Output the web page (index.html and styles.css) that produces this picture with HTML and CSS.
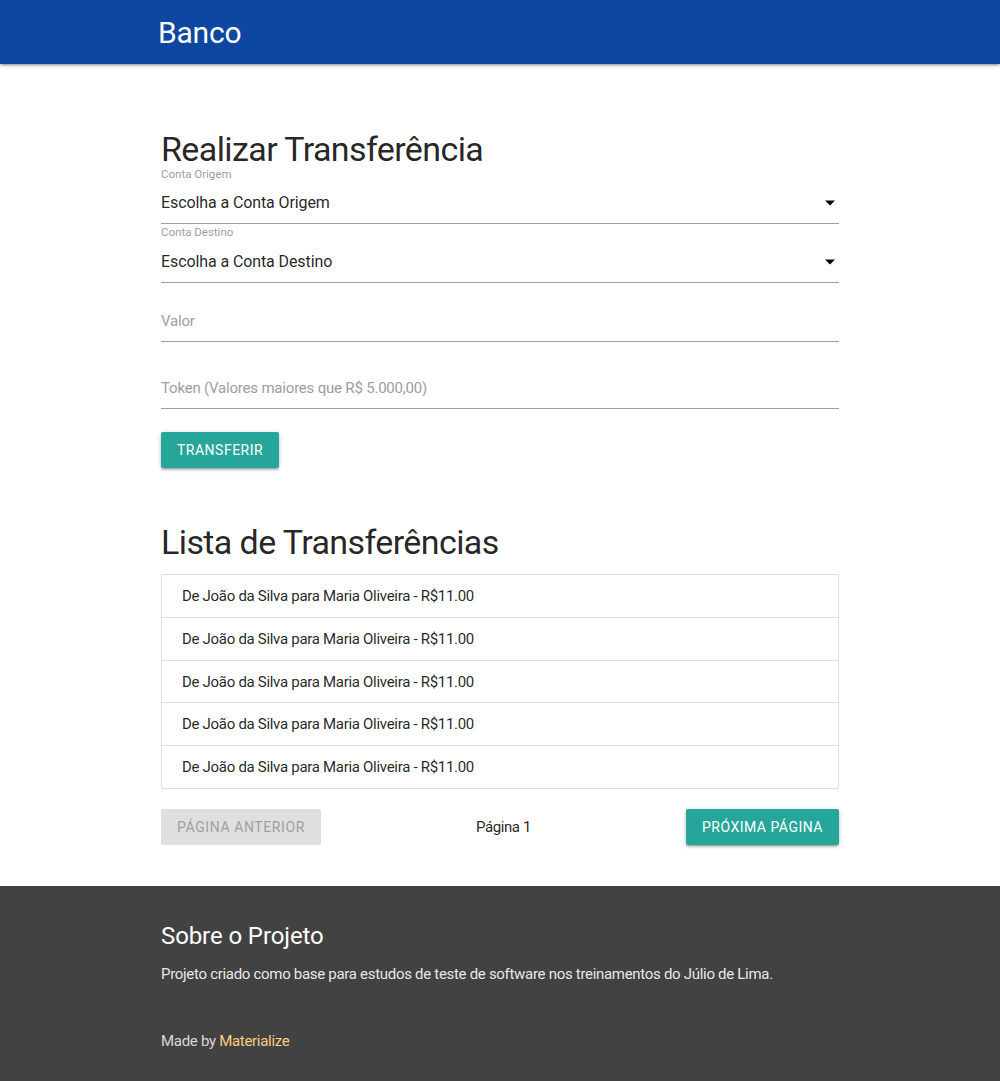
FILE: index.html
```html
<!DOCTYPE html>
<html lang="pt-BR">
<head>
<meta charset="utf-8">
<title>Banco</title>
<link rel="stylesheet" href="styles.css">
</head>
<body>
<header class="navbar">
  <div class="nav-inner">
    <span class="brand">Banco</span>
  </div>
</header>

<main class="container">
  <section class="transfer">
    <h4 class="title">Realizar Transferência</h4>
    <div class="select-field">
      <label class="small-label">Conta Origem</label>
      <div class="select-box">
        <span>Escolha a Conta Origem</span>
        <svg class="caret" width="10" height="6" viewBox="0 0 10 5"><path d="M0 0h10L5 5z" fill="#000"/></svg>
      </div>
    </div>
    <div class="select-field">
      <label class="small-label">Conta Destino</label>
      <div class="select-box">
        <span>Escolha a Conta Destino</span>
        <svg class="caret" width="10" height="6" viewBox="0 0 10 5"><path d="M0 0h10L5 5z" fill="#000"/></svg>
      </div>
    </div>
    <div class="input-field valor">
      <span class="placeholder">Valor</span>
    </div>
    <div class="input-field token">
      <span class="placeholder">Token (Valores maiores que R$ 5.000,00)</span>
    </div>
    <button class="btn btn-transfer">Transferir</button>
  </section>

  <section class="list">
    <h4 class="title">Lista de Transferências</h4>
    <ul class="collection">
      <li>De João da Silva para Maria Oliveira - R$11.00</li>
      <li>De João da Silva para Maria Oliveira - R$11.00</li>
      <li>De João da Silva para Maria Oliveira - R$11.00</li>
      <li>De João da Silva para Maria Oliveira - R$11.00</li>
      <li>De João da Silva para Maria Oliveira - R$11.00</li>
    </ul>
    <div class="pagination">
      <button class="btn btn-disabled">Página Anterior</button>
      <span class="page-num">Página 1</span>
      <button class="btn btn-next">Próxima Página</button>
    </div>
  </section>
</main>

<footer class="page-footer">
  <div class="container">
    <h5 class="footer-title">Sobre o Projeto</h5>
    <p class="footer-text">Projeto criado como base para estudos de teste de software nos treinamentos do Júlio de Lima.</p>
  </div>
  <div class="footer-copyright">
    <div class="container">Made by <a class="mat-link" href="#">Materialize</a></div>
  </div>
</footer>
</body>
</html>
```

FILE: styles.css
```css
* { box-sizing: border-box; }
html, body { margin: 0; padding: 0; }
body {
  font-family: Roboto, "Liberation Sans", sans-serif;
  font-size: 15px;
  letter-spacing: -0.3px;
  color: rgba(0,0,0,0.87);
  background: #fff;
}

.navbar {
  height: 64px;
  background: #0d47a1;
  box-shadow: 0 2px 2px 0 rgba(0,0,0,.14), 0 3px 1px -2px rgba(0,0,0,.12), 0 1px 5px 0 rgba(0,0,0,.2);
}
.nav-inner {
  width: 700px;
  margin: 0 auto;
  padding-left: 8px;
  height: 64px;
  overflow: hidden;
}
.brand {
  display: block;
  color: #fff;
  font-size: 30px;
  line-height: 66px;
  letter-spacing: -0.2px;
}

.container {
  width: 700px;
  margin: 0 auto;
  padding: 0 11px;
}

.transfer { padding-top: 67px; }
.title {
  margin: 0;
  font-weight: 400;
  font-size: 34px;
  line-height: 37px;
  letter-spacing: -0.6px;
  color: rgba(0,0,0,0.87);
}

.small-label {
  display: block;
  font-size: 11.5px;
  line-height: 17px;
  height: 17px;
  letter-spacing: 0;
  color: #9e9e9e;
}
.transfer .title + .select-field .small-label { line-height: 13px; height: 14px; }
.select-box {
  height: 42px;
  border-bottom: 1px solid #9e9e9e;
  display: flex;
  align-items: center;
  justify-content: space-between;
  font-size: 16px;
  letter-spacing: -0.1px;
  color: rgba(0,0,0,0.87);
}
.caret { margin-right: 4px; }

.input-field {
  height: 41px;
  border-bottom: 1px solid #9e9e9e;
  display: flex;
  align-items: center;
  font-size: 15px;
  letter-spacing: -0.2px;
  color: #9e9e9e;
}
.valor { margin-top: 18px; }
.token { margin-top: 25px; height: 42px; }

.btn {
  border: none;
  border-radius: 2px;
  height: 36px;
  line-height: 36px;
  padding: 0 16px;
  font-family: inherit;
  font-size: 14px;
  letter-spacing: .5px;
  text-transform: uppercase;
  color: #fff;
  background: #26a69a;
  box-shadow: 0 2px 2px 0 rgba(0,0,0,.14), 0 3px 1px -2px rgba(0,0,0,.12), 0 1px 5px 0 rgba(0,0,0,.2);
  cursor: pointer;
}
.btn-transfer { margin-top: 23px; display: block; }
.btn-disabled {
  background: #dfdfdf;
  color: #9f9f9f;
  box-shadow: none;
  letter-spacing: .6px;
}

.list { padding-top: 56px; }
.list .title { margin-bottom: 13px; }
.collection {
  list-style: none;
  margin: 0;
  padding: 0;
  border: 1px solid #e0e0e0;
  border-radius: 2px;
}
.collection li {
  padding: 11px 20px 9px;
  line-height: 21.75px;
  font-size: 15px;
  border-bottom: 1px solid #e0e0e0;
}
.collection li:last-child { border-bottom: none; }

.pagination {
  margin-top: 20px;
  display: flex;
  justify-content: space-between;
  align-items: center;
  padding-bottom: 41px;
}
.page-num { font-size: 15px; letter-spacing: -0.4px; }

.page-footer {
  background: #424242;
  color: #fff;
  padding-top: 35px;
}
.footer-title {
  margin: 0;
  font-weight: 400;
  font-size: 24px;
  line-height: 30px;
  letter-spacing: -0.1px;
}
.footer-text {
  margin: 12px 0 0;
  font-size: 15px;
  line-height: 22px;
  color: rgba(255,255,255,0.9);
}
.footer-copyright {
  padding: 45px 0 29px;
  color: rgba(255,255,255,0.8);
  font-size: 15px;
  line-height: 22px;
}
.mat-link { color: #ffcc80; text-decoration: none; }
```
